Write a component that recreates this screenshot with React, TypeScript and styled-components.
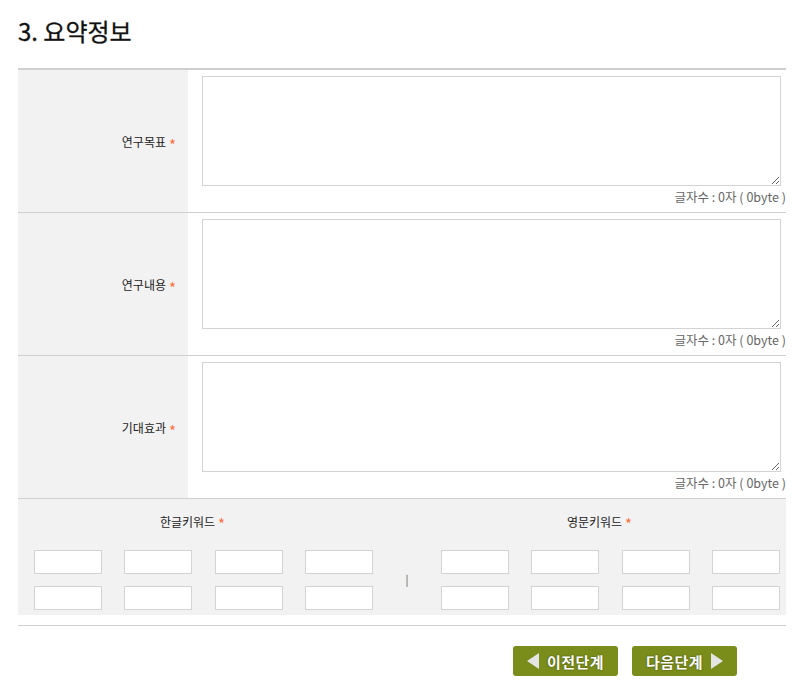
import React from "react";
import styled, { createGlobalStyle } from "styled-components";

const GlobalStyle = createGlobalStyle`
  html, body {
    margin: 0;
    padding: 0;
    background: #fff;
  }
  body {
    font-family: "Noto Sans CJK KR", "Noto Sans", sans-serif;
    color: #222;
  }
`;

const rows = ["연구목표", "연구내용", "기대효과"];

const Triangle: React.FC<{ dir: "left" | "right" }> = ({ dir }) => (
  <svg width="13" height="16" viewBox="0 0 13 16">
    {dir === "left" ? (
      <polygon points="12,0 12,16 0,8" fill="#e4e4e4" />
    ) : (
      <polygon points="1,0 1,16 13,8" fill="#e4e4e4" />
    )}
  </svg>
);

const App: React.FC = () => {
  return (
    <Page>
      <GlobalStyle />
      <Title>3. 요약정보</Title>

      <Table>
        {rows.map((label) => (
          <Row key={label}>
            <Label>
              {label}
              <Star>*</Star>
            </Label>
            <Cell>
              <TextArea />
              <Count>글자수 : 0자 ( 0byte )</Count>
            </Cell>
          </Row>
        ))}

        <Keywords>
          <KeywordGroup>
            <GroupLabel>
              한글키워드<Star>*</Star>
            </GroupLabel>
            <InputGrid>
              {Array.from({ length: 8 }).map((_, i) => (
                <Input key={i} />
              ))}
            </InputGrid>
          </KeywordGroup>
          <Divider>|</Divider>
          <KeywordGroup>
            <GroupLabel>
              영문키워드<Star>*</Star>
            </GroupLabel>
            <InputGrid>
              {Array.from({ length: 8 }).map((_, i) => (
                <Input key={i} />
              ))}
            </InputGrid>
          </KeywordGroup>
        </Keywords>
      </Table>

      <Buttons>
        <StepButton>
          <Triangle dir="left" />
          <span>이전단계</span>
        </StepButton>
        <StepButton>
          <span>다음단계</span>
          <Triangle dir="right" />
        </StepButton>
      </Buttons>
    </Page>
  );
};

const Page = styled.div`
  width: 768px;
  padding: 16px 24px 0 18px;
`;

const Title = styled.h2`
  margin: 0 0 22px;
  font-size: 24px;
  line-height: 30px;
  font-weight: 400;
  -webkit-text-stroke: 0.3px #111;
  color: #111;
`;

const Table = styled.div`
  border-top: 2px solid #cfcfcf;
  border-bottom: 1px solid #cfcfcf;
  padding-bottom: 10px;
`;

const Row = styled.div`
  display: flex;
  border-bottom: 1px solid #cfcfcf;
`;

const Label = styled.div`
  width: 170px;
  flex-shrink: 0;
  box-sizing: border-box;
  background: #f2f2f2;
  display: flex;
  align-items: center;
  justify-content: flex-end;
  padding-right: 12px;
  font-size: 12px;
  color: #222;
`;

const Star = styled.span`
  color: #ff6f3c;
  font-size: 15px;
  line-height: 1;
  margin-left: 3px;
  position: relative;
  top: 3px;
`;

const Cell = styled.div`
  flex: 1;
  padding: 6px 0 6px 14px;
`;

const TextArea = styled.textarea`
  display: block;
  box-sizing: border-box;
  width: calc(100% - 5px);
  height: 110px;
  margin: 0;
  border: 1px solid #d3d3d3;
  resize: vertical;
  font-family: inherit;
`;

const Count = styled.div`
  margin-top: 2px;
  text-align: right;
  font-size: 12.5px;
  line-height: 18px;
  color: #666;
`;

const Keywords = styled.div`
  display: flex;
  background: #f2f2f2;
  padding: 13px 6px 5px 16px;
`;

const KeywordGroup = styled.div`
  width: 339px;
`;

const GroupLabel = styled.div`
  text-align: center;
  padding-right: 22px;
  font-size: 12px;
  line-height: 20px;
  color: #222;
  margin-bottom: 18px;
`;

const InputGrid = styled.div`
  display: grid;
  grid-template-columns: repeat(4, 68px);
  justify-content: space-between;
  row-gap: 12px;
`;

const Input = styled.input`
  box-sizing: border-box;
  width: 68px;
  height: 24px;
  margin: 0;
  border: 1px solid #d3d3d3;
  background: #fff;
`;

const Divider = styled.div`
  width: 68px;
  align-self: flex-end;
  text-align: center;
  font-size: 11px;
  line-height: 12px;
  margin-bottom: 25px;
  color: #555;
`;

const Buttons = styled.div`
  display: flex;
  justify-content: flex-end;
  gap: 14px;
  padding: 20px 49px 0 0;
`;

const StepButton = styled.button`
  display: flex;
  align-items: center;
  justify-content: center;
  gap: 7px;
  width: 105px;
  height: 30px;
  padding: 0;
  border: none;
  border-radius: 3px;
  background: #7a8c19;
  color: #fff;
  font-family: "Noto Sans CJK KR", sans-serif;
  font-size: 15px;
  letter-spacing: 0.5px;
  font-weight: 700;
  text-shadow: 0 0 2px rgba(0, 0, 0, 0.45);
  cursor: pointer;
`;

export default App;
